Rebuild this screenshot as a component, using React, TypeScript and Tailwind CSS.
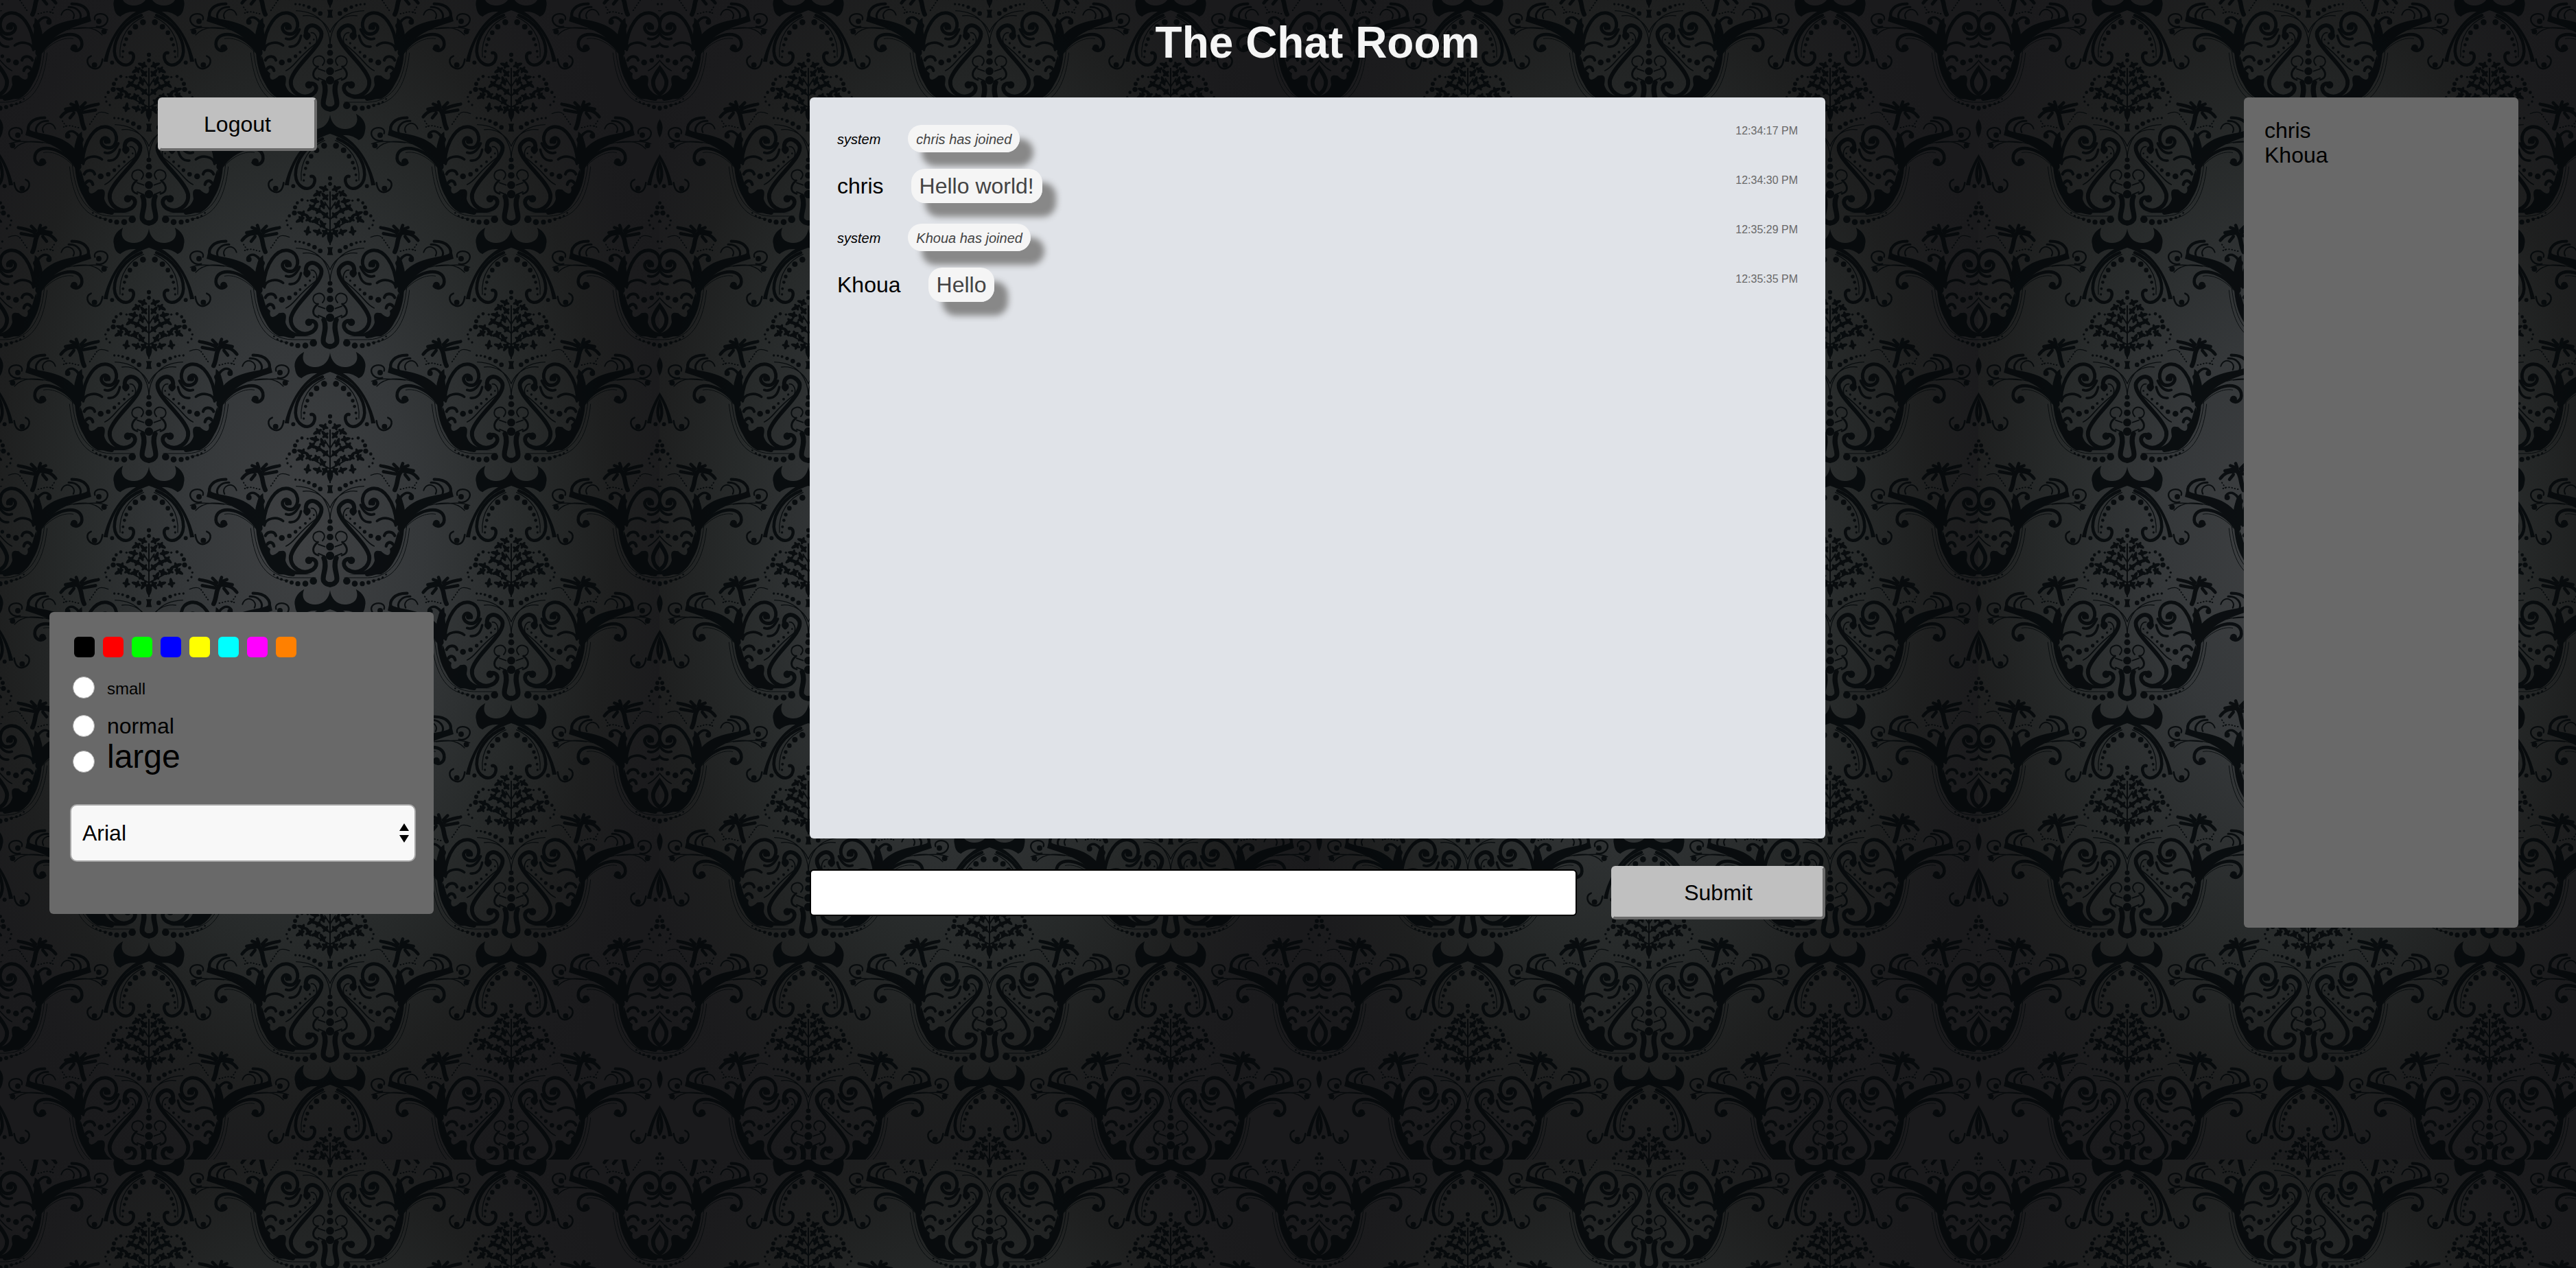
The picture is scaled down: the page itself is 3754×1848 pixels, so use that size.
import { useState } from "react";

const INK = "#030709";

type Dot = [number, number, number];

const archDots: Dot[] = [
  [697, 418, 13], [664, 438, 12], [640, 464, 10], [624, 492, 8], [616, 517, 7], [610, 545, 6], [608, 570, 5],
  [562, 595, 9], [485, 605, 12],
];

const bouquetDots: Dot[] = [
  [723, 560, 9], [723, 585, 8], [625, 658, 5], [600, 655, 7], [580, 668, 7], [570, 688, 9], [567, 712, 11],
  [545, 725, 7], [533, 745, 5], [537, 765, 5], [552, 780, 5], [572, 837, 5], [590, 838, 5], [608, 842, 6],
  [630, 850, 8], [655, 862, 10], [680, 878, 10],
];

const bodyDots: Dot[] = [
  [723, 1020, 10], [723, 1050, 13], [723, 1088, 14], [723, 1130, 17], [723, 1170, 18],
  [512, 1092, 13], [545, 1083, 10], [572, 1065, 8], [592, 1047, 6], [615, 1028, 6], [635, 1008, 5], [652, 992, 4],
  [650, 1280, 16], [615, 1292, 13], [582, 1292, 11], [555, 1287, 9], [532, 1280, 7], [510, 1273, 6], [493, 1265, 5],
  [478, 1252, 4], [127, 957, 12], [150, 912, 12], [258, 1028, 15], [622, 975, 16], [630, 1190, 16], [368, 915, 12],
  [537, 938, 12],
];

const leaves: [number, number, number][] = [
  [695, 605, 20], [668, 628, -30], [700, 640, 50], [655, 660, 10], [640, 690, -40], [690, 675, 70], [668, 700, 30],
  [600, 715, 20], [592, 742, -30], [628, 735, 60], [700, 720, 40], [660, 745, -20], [690, 762, 60], [625, 790, 100],
  [668, 795, 20], [700, 800, -60],
];

function Dots({ items }: { items: Dot[] }) {
  return (
    <g fill={INK} stroke="none">
      {items.map(([x, y, r]) => (
        <circle key={`${x}-${y}`} cx={x} cy={y} r={r} />
      ))}
    </g>
  );
}

function OrnamentHalf() {
  return (
    <g id="damask-half" fill="none" stroke={INK} strokeLinecap="round" strokeLinejoin="round">
      {/* Crown and arch */}
      <path
        fill={INK}
        stroke="none"
        d="M723 282C718 320 695 343 660 345C622 345 592 322 610 278C578 293 562 326 570 352C572 372 580 388 598 394C612 380 640 370 660 372C690 372 710 366 723 362Z"
      />
      <path
        fill={INK}
        stroke="none"
        d="M723 350C650 362 560 440 524 590L543 592C552 520 590 440 650 400C680 382 700 374 723 366Z"
      />
      <path strokeWidth="14" d="M690 388C620 415 572 480 572 545C575 600 625 622 650 590C664 565 652 548 640 552" />
      <path strokeWidth="4" d="M700 395C640 420 590 480 597 570" />
      <path strokeWidth="8" d="M520 580C515 615 500 625 480 620C450 610 445 575 470 566" />
      <Dots items={archDots} />

      {/* Bouquet */}
      <g fill={INK} stroke="none">
        {leaves.map(([x, y, angle]) => (
          <g key={`${x}-${y}`} transform={`translate(${x} ${y}) rotate(${angle})`}>
            <ellipse rx="22" ry="8" />
            <ellipse cx="4" rx="7" ry="17" />
          </g>
        ))}
        <path d="M723 790C705 800 706 830 723 850ZM723 862H710C716 872 716 882 710 896H723Z" />
      </g>
      <path strokeWidth="6" d="M723 620V850M723 740L680 700M723 790L650 750M723 700L700 665" />
      <Dots items={bouquetDots} />

      {/* Side flower */}
      <path strokeWidth="20" d="M412 800C432 820 424 850 440 882" />
      <path
        strokeWidth="14"
        d="M405 800C385 805 360 800 338 832M400 790L358 798M408 786L382 776M412 786L405 766M425 790L445 770M430 800C450 785 475 782 502 776M435 812L490 802M395 815L378 836"
      />
      <path strokeWidth="6" strokeDasharray="2 11" d="M350 876C380 862 400 880 425 880M345 850L365 880M495 820L462 868" />
      <path strokeWidth="4" d="M500 816C510 808 530 812 545 818" />

      {/* Arms */}
      <path
        fill={INK}
        stroke="none"
        d="M190 882C235 915 330 895 400 972C402 940 404 912 430 896L440 1035L402 1045C345 960 255 935 183 912Z"
      />
      <path strokeWidth="13" d="M268 836C212 835 187 868 198 900" />
      <path strokeWidth="9" d="M282 850C242 848 218 880 235 908" />
      <path strokeWidth="6" d="M262 900C242 868 300 838 314 884" />
      <path strokeWidth="4" d="M135 972C170 930 240 935 290 950M112 950C160 930 220 945 260 945" />
      <path strokeWidth="7" d="M160 935C112 945 92 888 135 880C160 876 172 890 167 905" />
      <path strokeWidth="14" d="M405 1050C350 965 240 945 225 1000C218 1035 250 1052 268 1032" />
      <path strokeWidth="3" d="M395 1048C340 990 290 982 262 988" />

      {/* Bowl outline */}
      <path strokeWidth="28" d="M414 1050C404 990 410 950 424 932" />
      <path strokeWidth="20" d="M408 1030C412 1150 460 1240 560 1250" />
      <path strokeWidth="3" d="M388 1040C400 1160 440 1264 560 1266H660M376 1050C388 1170 430 1276 540 1278" />
      <path
        fill={INK}
        stroke="none"
        d="M422 1060C440 1090 432 1120 462 1140C455 1165 470 1180 500 1150C540 1140 530 1170 528 1190C540 1230 570 1240 640 1252L500 1252C440 1220 415 1150 422 1060Z"
      />

      {/* Scrolls */}
      <path strokeWidth="15" d="M432 1030C440 930 490 868 540 876C590 886 592 950 560 966C524 974 505 944 520 928C532 918 550 926 548 942" />
      <path strokeWidth="11" d="M420 940C420 900 380 880 362 908M436 1038C440 1004 490 996 518 1018" />
      <path strokeWidth="13" d="M440 1082C452 1060 480 1062 486 1082M448 1120C458 1106 474 1110 478 1128" />
      <path strokeWidth="11" d="M530 988Q566 1000 590 948M546 1023Q586 1026 596 975" />
      <path strokeWidth="18" d="M622 985C600 925 660 912 684 958C702 1010 570 1100 552 1170C545 1220 600 1260 648 1230C676 1208 660 1176 632 1186" />
      <path strokeWidth="5" d="M530 1128C570 1110 570 1080 660 1010C672 990 660 960 640 962" />
      <path strokeWidth="9" d="M672 1168C640 1160 645 1130 670 1110" />
      <path strokeWidth="6" d="M690 1104C710 1080 690 1060 670 1064C642 1070 642 1106 668 1110M672 1120L700 1130M672 1160L700 1172" />
      <path strokeWidth="4" d="M723 1010C720 950 690 870 575 866M723 960C700 905 650 882 605 888" />
      <path strokeWidth="22" d="M696 1180C714 1220 685 1260 695 1280Q705 1295 723 1296" />
      <Dots items={bodyDots} />
    </g>
  );
}

const rowA = [162, 508, 855, 1201, 1548, 1894];
const rowB = [328, 674, 1021, 1367, 1714];
const motifs = [
  ...rowA.flatMap((y) => [-47, 481, 1009].map((x) => ({ x, y }))),
  ...rowB.flatMap((y) => [217, 745].map((x) => ({ x, y }))),
];

function DamaskBackground() {
  return (
    <svg aria-hidden="true" className="absolute inset-0 h-full w-full">
      <defs>
        <radialGradient id="glow" cx=".46" cy=".47" r=".6">
          <stop offset="0" stopColor="#3e4042" />
          <stop offset=".3" stopColor="#35383a" />
          <stop offset=".58" stopColor="#272a2a" />
          <stop offset=".78" stopColor="#1e1f1f" />
          <stop offset=".92" stopColor="#1b1b1d" />
          <stop offset="1" stopColor="#1a1a1c" />
        </radialGradient>
        <OrnamentHalf />
        <g id="damask" opacity=".86" transform="scale(.3333) translate(-723 -1305)">
          <use href="#damask-half" />
          <use href="#damask-half" transform="translate(1446 0) scale(-1 1)" />
        </g>
        <pattern id="wallpaper" width="961" height="1690" patternUnits="userSpaceOnUse">
          <rect width="961" height="1690" fill="url(#glow)" />
          {motifs.map(({ x, y }) => (
            <use key={`${x}-${y}`} href="#damask" transform={`translate(${x} ${y})`} />
          ))}
        </pattern>
      </defs>
      <rect width="100%" height="100%" fill="url(#wallpaper)" />
    </svg>
  );
}

const messages = [
  { user: "system", text: "chris has joined", time: "12:34:17 PM" },
  { user: "chris", text: "Hello world!", time: "12:34:30 PM" },
  { user: "system", text: "Khoua has joined", time: "12:35:29 PM" },
  { user: "Khoua", text: "Hello", time: "12:35:35 PM" },
];

const swatches = [
  { name: "black", color: "bg-[#000000]" },
  { name: "red", color: "bg-[#ff0000]" },
  { name: "green", color: "bg-[#00ff00]" },
  { name: "blue", color: "bg-[#0000ff]" },
  { name: "yellow", color: "bg-[#ffff00]" },
  { name: "cyan", color: "bg-[#00ffff]" },
  { name: "magenta", color: "bg-[#ff00ff]" },
  { name: "orange", color: "bg-[#ff8000]" },
];

const sizes = [
  { name: "small", row: "mt-7", label: "text-[24px] leading-[28px]" },
  { name: "normal", row: "mt-6", label: "text-[32px] leading-[32px]" },
  { name: "large", row: "mt-5", label: "text-[48px] leading-[46px]" },
];

const buttonClass =
  "rounded-[6px] border-4 border-t-[#c0c0c0] border-r-[#6b6b6b] border-b-[#6b6b6b] border-l-[#c0c0c0] bg-[#c0c0c0] text-center text-black";

function Message({ user, text, time }: (typeof messages)[number]) {
  const system = user === "system";
  return (
    <li className="flex h-[72px] justify-between">
      <p className="text-[32px] leading-[34px] whitespace-nowrap">
        <span className={system ? "mr-10 text-[20px] italic" : "mr-10"}>{user}</span>
        <span
          className={
            system
              ? "rounded-[20px] bg-[#f5f5f5] px-3 pt-2.5 pb-2 text-[20px] text-[#444444] italic shadow-[20px_20px_10px_#888888]"
              : "rounded-[20px] bg-[#f5f5f5] px-3 py-[7px] text-[#444444] shadow-[20px_20px_10px_#888888]"
          }
        >
          {text}
        </span>
      </p>
      <time className="text-[16px] leading-[18px] text-[#696969]">{time}</time>
    </li>
  );
}

export default function App() {
  const [draft, setDraft] = useState("");
  return (
    <div className="relative min-h-screen overflow-hidden bg-[#1a1a1c] font-['Liberation_Sans',Arial,sans-serif] text-[32px] text-black">
      <DamaskBackground />
      <div className="relative">
        <header className="grid h-[142px] grid-cols-[1180fr_1480fr_1094fr]">
          <h1 className="col-start-2 pt-[26px] text-center text-[64px] leading-[72px] font-bold whitespace-nowrap text-[#f5f5f5]">
            The Chat Room
          </h1>
        </header>

        <main className="grid grid-cols-[1180fr_1480fr_1094fr]">
          <div className="flex flex-col justify-between pb-5 pl-[72px]">
            <div className="flex w-[560px] justify-center pr-3">
              <button type="button" className={`${buttonClass} h-[78px] w-[232px]`}>
                Logout
              </button>
            </div>

            <section
              aria-label="Text style"
              className="h-[440px] w-[560px] rounded-[6px] bg-[#696969] pt-9 pr-[26px] pl-[30px]"
            >
              <div className="flex gap-3 pl-1.5">
                {swatches.map(({ name, color }) => (
                  <button key={name} type="button" aria-label={name} className={`size-[30px] rounded-[6px] ${color}`} />
                ))}
              </div>
              <div className="pl-1">
                {sizes.map(({ name, row, label }) => (
                  <div key={name} className={`flex h-8 items-end gap-[18px] ${row}`}>
                    <input
                      id={`size-${name}`}
                      type="radio"
                      name="size"
                      className="size-8 shrink-0 appearance-none rounded-full border border-[#b0b0b0] bg-white checked:border-8 checked:border-blue-600"
                    />
                    <label htmlFor={`size-${name}`} className={label}>
                      {name}
                    </label>
                  </div>
                ))}
              </div>
              <div className="relative mt-[46px]">
                <select
                  aria-label="Font"
                  className="h-[84px] w-full appearance-none rounded-[10px] border-2 border-[#a6a6a6] bg-[#f8f8f8] px-4"
                >
                  <option>Arial</option>
                  <option>Courier New</option>
                  <option>Times New Roman</option>
                </select>
                <svg
                  aria-hidden="true"
                  viewBox="0 0 14 28"
                  className="pointer-events-none absolute top-7 right-2.5 h-7 w-3.5"
                >
                  <path d="M7 0L14 11H0ZM7 28L0 17H14Z" fill="#000" />
                </svg>
              </div>
            </section>
          </div>

          <div>
            <ul aria-label="Messages" className="h-[1080px] rounded-[6px] bg-[#e0e3e8] p-10">
              {messages.map((message) => (
                <Message key={message.time} {...message} />
              ))}
            </ul>
            <form className="mt-10 flex items-center gap-[50px]" onSubmit={(event) => event.preventDefault()}>
              <input
                type="text"
                aria-label="Message"
                value={draft}
                onChange={(event) => setDraft(event.target.value)}
                className="h-[68px] min-w-0 flex-1 rounded-[6px] border-2 border-black bg-white px-3"
              />
              <button type="submit" className={`${buttonClass} h-[78px] w-[312px]`}>
                Submit
              </button>
            </form>
          </div>

          <div className="flex justify-end pr-[84px]">
            <ul
              aria-label="Users"
              className="h-[1210px] w-[400px] rounded-[6px] bg-[#696969] px-[30px] pt-[30px] leading-[36px]"
            >
              <li>chris</li>
              <li>Khoua</li>
            </ul>
          </div>
        </main>
      </div>
    </div>
  );
}
